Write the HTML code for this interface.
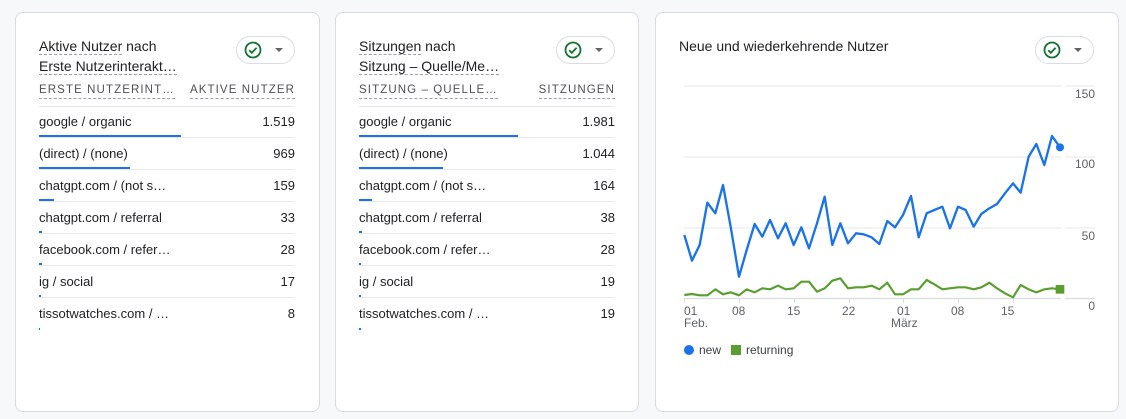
<!DOCTYPE html>
<html><head><meta charset="utf-8"><style>
*{box-sizing:border-box;margin:0;padding:0}
body{width:1126px;height:419px;background:#f7f8fa;font-family:"Liberation Sans",Arial,sans-serif;color:#202124;position:relative;overflow:hidden}
.card{position:absolute;top:12px;height:400px;background:#fff;border:1px solid #dadce0;border-radius:8px}
.abs{position:absolute}
.title{font-size:14px;line-height:20px;color:#202124}
.dash{border-bottom:1px dashed #9aa0a6}
.hdr{font-size:11.5px;letter-spacing:1.1px;color:#4d5156;text-transform:uppercase;line-height:14px}
.row{position:absolute;height:32px;font-size:13px;border-bottom:1px solid #e8eaed;color:#202124}
.row .l{position:absolute;left:0;top:8px}
.row .r{position:absolute;right:0;top:8px}
.row .bar{position:absolute;left:0;bottom:0;height:2px;background:#1a73e8}
.pill{position:absolute;width:59px;height:28px;border:1px solid #dadce0;border-radius:14px;background:#fff}
</style></head><body>

<!-- card 1 -->
<div class="card" style="left:15px;width:305px"></div>
<div class="abs title" style="left:39px;top:36px"><span class="dash">Aktive Nutzer</span> nach<br><span class="dash">Erste Nutzerinterakt…</span></div>
<div class="pill" style="left:236px;top:36px">
<svg width="59" height="28" style="position:absolute;left:-1px;top:-1px"><circle cx="17" cy="14" r="7.5" fill="none" stroke="#137333" stroke-width="1.8"/><path d="M13.2 14.2l2.6 2.6 4.8-5" fill="none" stroke="#137333" stroke-width="1.8"/><path d="M39 12h8l-4 4z" fill="#5f6368"/></svg></div>
<div class="abs hdr" style="left:39px;top:83px"><span class="dash" style="padding-bottom:2px">Erste Nutzerint…</span></div>
<div class="abs hdr" style="right:831px;top:83px"><span class="dash" style="padding-bottom:2px">Aktive Nutzer</span></div>
<div class="abs" style="left:39px;top:106px;width:256px;border-top:1px solid #e8eaed"></div>
<div class="row" style="left:39px;top:106px;width:256px"><span class="l">google / organic</span><span class="r">1.519</span><span class="bar" style="width:142px"></span></div>
<div class="row" style="left:39px;top:138px;width:256px"><span class="l">(direct) / (none)</span><span class="r">969</span><span class="bar" style="width:91px"></span></div>
<div class="row" style="left:39px;top:170px;width:256px"><span class="l">chatgpt.com / (not s…</span><span class="r">159</span><span class="bar" style="width:15px"></span></div>
<div class="row" style="left:39px;top:202px;width:256px"><span class="l">chatgpt.com / referral</span><span class="r">33</span><span class="bar" style="width:3px"></span></div>
<div class="row" style="left:39px;top:234px;width:256px"><span class="l">facebook.com / refer…</span><span class="r">28</span><span class="bar" style="width:3px"></span></div>
<div class="row" style="left:39px;top:266px;width:256px"><span class="l">ig / social</span><span class="r">17</span><span class="bar" style="width:2px"></span></div>
<div class="row" style="left:39px;top:298px;width:256px;border-bottom:none"><span class="l">tissotwatches.com / …</span><span class="r">8</span><span class="bar" style="width:1px"></span></div>

<!-- card 2 -->
<div class="card" style="left:335px;width:304px"></div>
<div class="abs title" style="left:359px;top:36px"><span class="dash">Sitzungen</span> nach<br><span class="dash">Sitzung – Quelle/Me…</span></div>
<div class="pill" style="left:556px;top:36px">
<svg width="59" height="28" style="position:absolute;left:-1px;top:-1px"><circle cx="17" cy="14" r="7.5" fill="none" stroke="#137333" stroke-width="1.8"/><path d="M13.2 14.2l2.6 2.6 4.8-5" fill="none" stroke="#137333" stroke-width="1.8"/><path d="M39 12h8l-4 4z" fill="#5f6368"/></svg></div>
<div class="abs hdr" style="left:359px;top:83px"><span class="dash" style="padding-bottom:2px">Sitzung – Quelle…</span></div>
<div class="abs hdr" style="right:511px;top:83px"><span class="dash" style="padding-bottom:2px">Sitzungen</span></div>
<div class="abs" style="left:359px;top:106px;width:256px;border-top:1px solid #e8eaed"></div>
<div class="row" style="left:359px;top:106px;width:256px"><span class="l">google / organic</span><span class="r">1.981</span><span class="bar" style="width:159px"></span></div>
<div class="row" style="left:359px;top:138px;width:256px"><span class="l">(direct) / (none)</span><span class="r">1.044</span><span class="bar" style="width:84px"></span></div>
<div class="row" style="left:359px;top:170px;width:256px"><span class="l">chatgpt.com / (not s…</span><span class="r">164</span><span class="bar" style="width:13px"></span></div>
<div class="row" style="left:359px;top:202px;width:256px"><span class="l">chatgpt.com / referral</span><span class="r">38</span><span class="bar" style="width:3px"></span></div>
<div class="row" style="left:359px;top:234px;width:256px"><span class="l">facebook.com / refer…</span><span class="r">28</span><span class="bar" style="width:2px"></span></div>
<div class="row" style="left:359px;top:266px;width:256px"><span class="l">ig / social</span><span class="r">19</span><span class="bar" style="width:2px"></span></div>
<div class="row" style="left:359px;top:298px;width:256px;border-bottom:none"><span class="l">tissotwatches.com / …</span><span class="r">19</span><span class="bar" style="width:2px"></span></div>

<!-- card 3 -->
<div class="card" style="left:655px;width:464px"></div>
<div class="abs title" style="left:679px;top:36px">Neue und wiederkehrende Nutzer</div>
<div class="pill" style="left:1035px;top:36px">
<svg width="59" height="28" style="position:absolute;left:-1px;top:-1px"><circle cx="17" cy="14" r="7.5" fill="none" stroke="#137333" stroke-width="1.8"/><path d="M13.2 14.2l2.6 2.6 4.8-5" fill="none" stroke="#137333" stroke-width="1.8"/><path d="M39 12h8l-4 4z" fill="#5f6368"/></svg></div>

<svg width="1126" height="419" style="position:absolute;left:0;top:0">
<g stroke="#ececec" stroke-width="1.2">
<line x1="684" y1="86" x2="1061" y2="86"/><line x1="1065" y1="86" x2="1095" y2="86"/>
<line x1="684" y1="157" x2="1061" y2="157"/><line x1="1065" y1="157" x2="1095" y2="157"/>
<line x1="684" y1="228" x2="1061" y2="228"/><line x1="1065" y1="228" x2="1095" y2="228"/>
</g>
<line x1="684" y1="298.5" x2="1061" y2="298.5" stroke="#dadce0" stroke-width="1.2"/>
<line x1="1065" y1="298.5" x2="1095" y2="298.5" stroke="#dadce0" stroke-width="1.2"/>
<g stroke="#dadce0"><line x1="684.5" y1="298" x2="684.5" y2="303"/><line x1="739.5" y1="298" x2="739.5" y2="303"/><line x1="794.5" y1="298" x2="794.5" y2="303"/><line x1="849.5" y1="298" x2="849.5" y2="303"/><line x1="903.5" y1="298" x2="903.5" y2="303"/><line x1="958.5" y1="298" x2="958.5" y2="303"/><line x1="1013.5" y1="298" x2="1013.5" y2="303"/></g>
<g transform="translate(660,20) scale(0.33333)">
<polyline fill="none" stroke="#1a73e8" stroke-width="7" stroke-linejoin="round" points="73,645 96,722 119,675 142,548 166,580 189,495 212,620 237,770 260,690 284,612 307,650 330,600 354,655 377,610 401,675 424,622 447,685 471,610 494,530 517,675 541,610 564,670 588,640 611,643 635,652 658,672 682,603 705,622 729,585 753,528 776,652 800,580 823,570 847,560 870,625 894,560 917,570 941,620 964,582 988,565 1011,552 1035,520 1059,490 1082,518 1106,410 1129,372 1153,435 1176,348 1200,382"/>
<polyline fill="none" stroke="#5a9e2f" stroke-width="6.5" stroke-linejoin="round" points="73,825 96,822 119,826 142,826 166,808 189,823 212,817 237,826 260,808 284,817 307,805 330,808 354,797 377,808 401,805 424,785 447,785 471,815 494,805 517,782 541,775 564,805 588,802 611,802 635,797 658,808 682,788 705,823 729,823 753,808 776,808 800,780 823,793 847,808 870,805 894,802 917,802 941,808 964,802 988,788 1011,805 1035,820 1059,832 1082,795 1106,808 1129,817 1153,808 1176,805 1200,808"/>
<circle cx="1200" cy="382" r="12" fill="#1a73e8"/>
<rect x="1187" y="795" width="26" height="26" fill="#5a9e2f"/>
</g>
<g font-family="Liberation Sans, Arial, sans-serif" font-size="12" fill="#5f6368">
<text x="1095" y="98" text-anchor="end">150</text>
<text x="1095" y="168" text-anchor="end">100</text>
<text x="1095" y="240" text-anchor="end">50</text>
<text x="1095" y="310" text-anchor="end">0</text>
<text x="684" y="315">01</text><text x="684" y="327">Feb.</text>
<text x="732" y="315">08</text>
<text x="787" y="315">15</text>
<text x="842" y="315">22</text>
<text x="897" y="315">01</text><text x="891" y="327">März</text>
<text x="951" y="315">08</text>
<text x="1001" y="315">15</text>
</g>
<circle cx="689" cy="350" r="5" fill="#1a73e8"/>
<text x="699" y="354" font-family="Liberation Sans, Arial, sans-serif" font-size="12" fill="#3c4043">new</text>
<rect x="731" y="345" width="10" height="10" fill="#5a9e2f"/>
<text x="746" y="354" font-family="Liberation Sans, Arial, sans-serif" font-size="12" fill="#3c4043">returning</text>
</svg>
</body></html>
